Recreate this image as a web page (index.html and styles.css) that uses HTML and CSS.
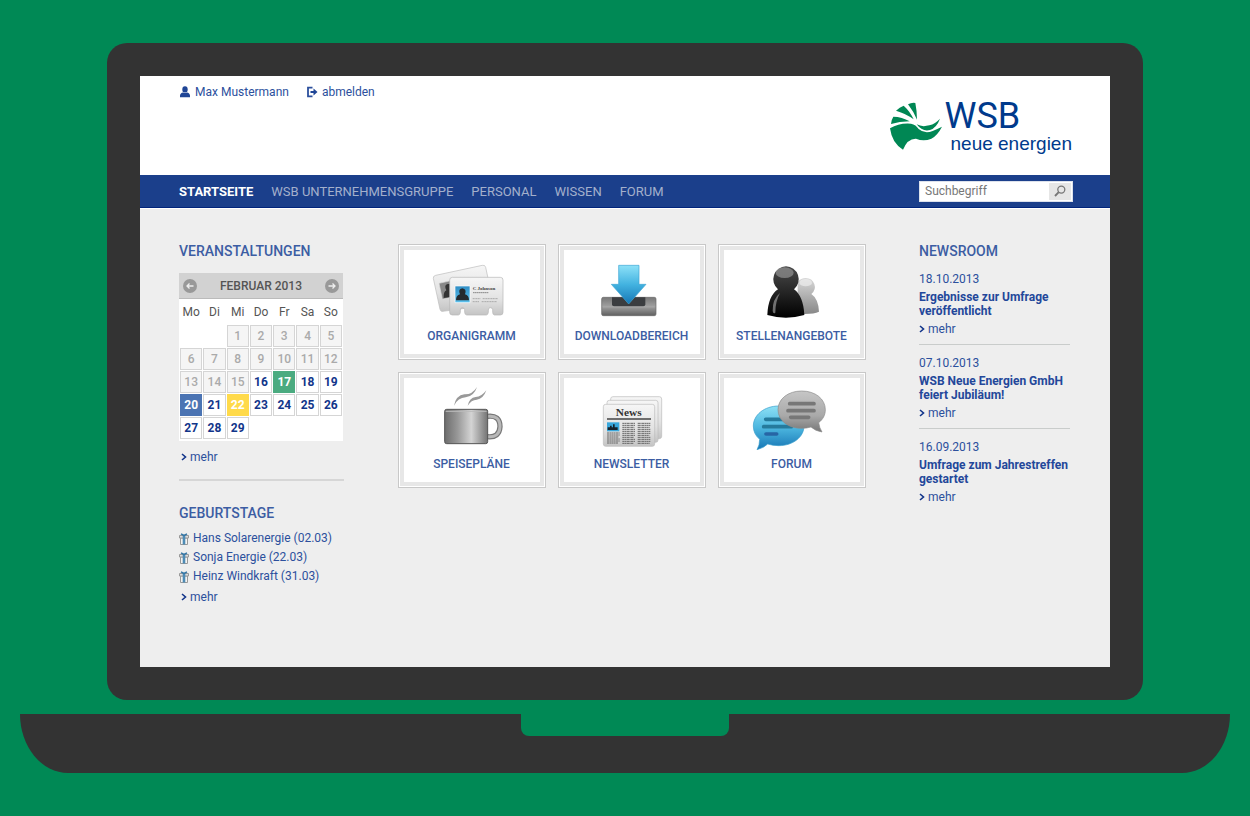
FILE: index.html
```html
<!DOCTYPE html>
<html lang="de">
<head>
<meta charset="utf-8">
<title>WSB neue energien – Intranet</title>
<link rel="stylesheet" href="styles.css">
</head>
<body>
<div class="lid">
<div class="screen">
  <header class="header">
    <div class="account">
      <a href="#"><svg width="12" height="12" viewBox="0 0 12 12"><ellipse cx="6" cy="3.4" rx="2.7" ry="3.2"/><path d="M1 11.3V9.6C1 7.600 2.500 6.600 4 6.400Q6 7.800 8 6.400C9.500 6.600 11 7.600 11 9.600V11.300Z"/></svg>Max Mustermann</a>
      <a href="#"><svg width="12" height="12" viewBox="0 0 12 12"><path d="M6.500 1.700H2V10.300H6.500" fill="none" stroke="currentColor" stroke-width="1.800"/><path d="M4.500 5H7.500V2.600L11.500 6L7.500 9.400V7H4.500Z"/></svg>abmelden</a>
    </div>
    <a class="logo" href="#">
      <svg class="logo-mark" width="52" height="48" viewBox="84 77 156 144">
        <g fill="#008754">
          <path d="M138 84Q149 78 160 80Q165 105 165 130Q155 106 138 84Z"/>
          <path d="M102 103Q113 92 125 88Q144 105 155 129Q133 112 102 103Z"/>
          <path d="M87 143Q88 130 94 121Q120 121 143 135Q112 135 87 143Z"/>
          <path d="M84 156Q112 139 147 142Q162 145 170 158Q188 174 212 164Q228 157 240 151Q226 178 208 187Q185 197 162 187Q137 186 123 220Q90 201 84 156Z"/>
          <path d="M164 144Q180 153 202 147Q220 142 234 127Q224 154 204 161Q181 167 164 144Z"/>
        </g>
      </svg>
      <span class="logo-text"><span class="logo-name">WSB</span><span class="logo-claim">neue energien</span></span>
    </a>
  </header>

  <div class="bar">
    <nav class="nav">
      <a class="active" href="#">STARTSEITE</a>
      <a href="#">WSB UNTERNEHMENSGRUPPE</a>
      <a href="#">PERSONAL</a>
      <a href="#">WISSEN</a>
      <a href="#">FORUM</a>
    </nav>
    <form class="search">
      <input type="search" placeholder="Suchbegriff" aria-label="Suchbegriff">
      <button type="button" aria-label="Suchen"><svg width="12" height="12" viewBox="0 0 12 12" fill="none" stroke="#777" stroke-width="1.300"><circle cx="7.300" cy="4.600" r="3.500"/><path d="M4.700 7.200L1 11" stroke-width="1.900"/></svg></button>
    </form>
  </div>

  <main class="content">
    <aside class="side">
      <section class="events">
        <h2>VERANSTALTUNGEN</h2>
        <div class="calendar">
          <div class="month">
            <button type="button" aria-label="Vorheriger Monat"><svg width="14" height="14" viewBox="0 0 14 14"><circle cx="7" cy="7" r="7" fill="#999"/><path d="M10.500 7H4M6.500 4.500L4 7L6.500 9.500" fill="none" stroke="#eee" stroke-width="1.300"/></svg></button>
            <span>FEBRUAR 2013</span>
            <button type="button" aria-label="Nächster Monat"><svg width="14" height="14" viewBox="0 0 14 14"><circle cx="7" cy="7" r="7" fill="#999"/><path d="M3.500 7H10M7.500 4.500L10 7L7.500 9.500" fill="none" stroke="#eee" stroke-width="1.300"/></svg></button>
          </div>
          <table>
            <thead><tr><th>Mo</th><th>Di</th><th>Mi</th><th>Do</th><th>Fr</th><th>Sa</th><th>So</th></tr></thead>
            <tbody>
              <tr><td class="none"></td><td class="none"></td><td class="past">1</td><td class="past">2</td><td class="past">3</td><td class="past">4</td><td class="past">5</td></tr>
              <tr><td class="past">6</td><td class="past">7</td><td class="past">8</td><td class="past">9</td><td class="past">10</td><td class="past">11</td><td class="past">12</td></tr>
              <tr><td class="past">13</td><td class="past">14</td><td class="past">15</td><td>16</td><td class="green">17</td><td>18</td><td>19</td></tr>
              <tr><td class="blue">20</td><td>21</td><td class="yellow">22</td><td>23</td><td>24</td><td>25</td><td>26</td></tr>
              <tr><td>27</td><td>28</td><td>29</td><td class="none"></td><td class="none"></td><td class="none"></td><td class="none"></td></tr>
            </tbody>
          </table>
        </div>
        <a class="more" href="#"><svg width="6" height="8" viewBox="0 0 6 8"><path d="M1 1L4.500 4L1 7"/></svg>mehr</a>
      </section>
      <section>
        <h2>GEBURTSTAGE</h2>
        <svg class="defs" width="0" height="0"><defs>
          <g id="gift"><path d="M1.500 5H8.500V11.500H1.500Z" fill="#f4f4f2" stroke="#999"/><path d="M.5 2.500H9.500V5H.5Z" fill="#ddd" stroke="#999"/><path d="M3.700 2.500H6.300V11.500H3.700Z" fill="#4d8bb5"/><path d="M5 2.500L2 .8M5 2.500L8 .8" stroke="#3576a5" stroke-width="1.500"/></g>
        </defs></svg>
        <ul class="birthdays">
          <li><svg width="10" height="12" viewBox="0 0 10 12"><use href="#gift"/></svg>Hans Solarenergie (02.03)</li>
          <li><svg width="10" height="12" viewBox="0 0 10 12"><use href="#gift"/></svg>Sonja Energie (22.03)</li>
          <li><svg width="10" height="12" viewBox="0 0 10 12"><use href="#gift"/></svg>Heinz Windkraft (31.03)</li>
        </ul>
        <a class="more" href="#"><svg width="6" height="8" viewBox="0 0 6 8"><path d="M1 1L4.500 4L1 7"/></svg>mehr</a>
      </section>
    </aside>

    <div class="tiles">
      <a class="tile" href="#"><span class="face">
        <svg width="80" height="68" viewBox="123 69 240 204">
          <defs>
            <linearGradient id="card" x1="0" y1="0" x2="0" y2="1"><stop offset="0" stop-color="#f6f6f6"/><stop offset=".6" stop-color="#e2e2e2"/><stop offset="1" stop-color="#c4c4c4"/></linearGradient>
            <linearGradient id="photo" x1="0" y1="0" x2="0" y2="1"><stop offset="0" stop-color="#2f8dc4"/><stop offset="1" stop-color="#5cc2ee"/></linearGradient>
          </defs>
          <path d="M134 121L274 91Q282 89 284 97L308 208L156 229Q149 231 147 223L127 130Q126 123 134 121Z" fill="url(#card)" stroke="#bbb" stroke-width="2"/>
          <path d="M144 145L184 136L195 184L154 193Z" fill="#888" stroke="#ddd" stroke-width="2"/>
          <path d="M158 189Q157 170 166 166Q158 150 170 147H190V184Z" fill="#333"/>
          <path d="M184 127H328Q336 127 336 135V232Q336 240 328 240H310Q305 239 305 232V224Q304 218 298 218Q292 218 292 225V232Q291 240 286 240H227Q221 239 221 232V224Q220 218 214 218Q208 218 208 225V232Q207 240 202 240H184Q176 240 176 232V135Q176 127 184 127Z" fill="url(#card)" stroke="#b5b5b5" stroke-width="2"/>
          <path d="M192 153H237V203H192Z" fill="url(#photo)" stroke="#fff" stroke-width="2"/>
          <path d="M195 196Q195 181 207 178Q200 162 214 160Q228 162 222 178Q234 181 234 196Z" fill="#252a2e"/>
          <text x="245" y="165" class="card-name">C Johnson</text>
          <path d="M246 173H292" stroke="#888" stroke-width="3" stroke-dasharray="5 1"/>
          <path d="M245 191H268M275 191H321M245 200H264M272 200H318" stroke="#aaa" stroke-width="3" stroke-dasharray="4 1"/>
        </svg>
        <span class="label">ORGANIGRAMM</span></span></a>
      <a class="tile" href="#"><span class="face">
        <svg width="80" height="68" viewBox="603 69 240 204">
          <defs>
            <linearGradient id="tray" x1="0" y1="0" x2="0" y2="1"><stop offset="0" stop-color="#777"/><stop offset=".5" stop-color="#a0a0a0"/><stop offset="1" stop-color="#606060"/></linearGradient>
            <linearGradient id="arrow" x1="0" y1="0" x2="0" y2="1"><stop offset="0" stop-color="#8de1f8"/><stop offset=".5" stop-color="#42b2e0"/><stop offset="1" stop-color="#1676b5"/></linearGradient>
          </defs>
          <rect x="632" y="187" width="163" height="55" rx="5" fill="url(#tray)" stroke="#666" stroke-width="2"/>
          <path d="M663 187H763V208Q763 214 757 214H669Q663 214 663 208Z" fill="#3b3d40"/>
          <path d="M636 216H791" stroke="#bbb" stroke-width="2" opacity=".5"/>
          <path d="M683 91H744V148H765L713 207L661 148H683Z" fill="url(#arrow)" stroke="#3da4d3" stroke-width="2"/>
        </svg>
        <span class="label">DOWNLOADBEREICH</span></span></a>
      <a class="tile" href="#"><span class="face">
        <svg width="80" height="68" viewBox="363 69 240 204">
          <defs>
            <linearGradient id="dark" x1="0" y1="0" x2="0" y2="1"><stop offset="0" stop-color="#4a4a4a"/><stop offset=".5" stop-color="#252525"/><stop offset="1" stop-color="#000"/></linearGradient>
            <linearGradient id="light" x1="0" y1="0" x2="0" y2="1"><stop offset="0" stop-color="#d8d8d8"/><stop offset="1" stop-color="#888"/></linearGradient>
          </defs>
          <path d="M524 129A28 27 0 0 1 541 177Q562 191 564 230Q545 239 500 236V140Q510 129 524 129Z" fill="url(#light)"/>
          <ellipse cx="524" cy="143" rx="19" ry="11" fill="#eee" opacity=".7"/>
          <path d="M465 94A39 39 0 0 1 489 163Q517 183 520 240Q465 256 409 240Q411 183 441 163A39 39 0 0 1 465 94Z" fill="url(#dark)"/>
          <ellipse cx="461" cy="113" rx="27" ry="16" fill="#999" opacity=".65"/>
          <path d="M447 174Q424 192 425 228Q427 239 433 233Q433 199 447 174Z" fill="#999" opacity=".7"/>
        </svg>
        <span class="label">STELLENANGEBOTE</span></span></a>
      <a class="tile" href="#"><span class="face">
        <svg width="80" height="68" viewBox="123 63 240 204">
          <defs>
            <linearGradient id="mug"><stop offset="0" stop-color="#6d6d6d"/><stop offset=".3" stop-color="#989898"/><stop offset=".62" stop-color="#d4d4d4"/><stop offset="1" stop-color="#747474"/></linearGradient>
          </defs>
          <path d="M189 122Q195 91 220 88Q244 89 258 66Q249 94 224 97Q201 98 189 122ZM230 122Q235 98 254 96Q272 95 286 76Q277 102 257 104Q241 104 230 122Z" fill="#999"/>
          <path d="M289 154Q327 149 327 185Q325 219 289 215" fill="none" stroke="#777" stroke-width="16"/>
          <path d="M289 154Q327 149 327 185Q325 219 289 215" fill="none" stroke="#b8b8b8" stroke-width="9"/>
          <rect x="161" y="133" width="129" height="103" rx="6" fill="url(#mug)" stroke="#555" stroke-width="3"/>
          <path d="M164 139H287" stroke="#bbb" stroke-width="3"/>
        </svg>
        <span class="label">SPEISEPLÄNE</span></span></a>
      <a class="tile" href="#"><span class="face">
        <svg width="80" height="68" viewBox="603 63 240 204">
          <g fill="url(#card)" stroke="#bbb" stroke-width="2">
            <rect x="659" y="95" width="153" height="126" rx="7"/>
            <rect x="648" y="106" width="153" height="126" rx="7"/>
            <rect x="637" y="118" width="154" height="126" rx="7"/>
          </g>
          <text x="713" y="154" text-anchor="middle" class="paper-name">News</text>
          <path d="M648 162H780" stroke="#444" stroke-width="5"/>
          <rect x="648" y="172" width="37" height="27" fill="#39a7dc"/>
          <path d="M650 195V187H657V182H662V187H666V178H671V187H680V195Z" fill="#17222b"/>
          <path d="M648 204H686M648 210H686M648 216H683M648 222H686M648 228H686M648 234H682M694 175H732M694 181H732M694 187H730M694 193H732M694 199H732M694 205H731M694 211H732M694 217H729M694 223H732M694 229H732M694 235H728M740 175H779M740 181H779M740 187H776M740 193H779M740 199H778M740 205H779M740 211H775M740 217H779M740 223H779M740 229H778M740 235H776" stroke="#666" stroke-width="3" stroke-dasharray="7 1 4 1"/>
        </svg>
        <span class="label">NEWSLETTER</span></span></a>
      <a class="tile" href="#"><span class="face">
        <svg width="80" height="68" viewBox="363 63 240 204">
          <defs>
            <linearGradient id="bubble" x1="0" y1="0" x2="0" y2="1"><stop offset="0" stop-color="#8de0f5"/><stop offset=".5" stop-color="#4cb6df"/><stop offset="1" stop-color="#1776b5"/></linearGradient>
            <linearGradient id="grey" x1="0" y1="0" x2="0" y2="1"><stop offset="0" stop-color="#c6c6c6"/><stop offset=".6" stop-color="#a9a9a9"/><stop offset="1" stop-color="#777"/></linearGradient>
          </defs>
          <path d="M443 123C486 123 519 150 519 183C519 216 486 242 443 242Q425 242 410 237Q398 249 378 254Q386 241 386 223Q367 207 367 183C367 150 400 123 443 123Z" fill="url(#bubble)" stroke="#369dcc" stroke-width="2"/>
          <path d="M404 163H455M398 185H481" stroke="#267a9c" stroke-width="11" stroke-linecap="round"/><path d="M405 207H437" stroke="#2765a5" stroke-width="11" stroke-linecap="round"/>
          <path d="M512 78C553 78 583 102 583 134C583 150 576 163 563 173Q565 188 573 201Q553 198 540 186Q527 190 512 190C471 190 441 166 441 134C441 102 471 78 512 78Z" fill="url(#grey)" stroke="#8b8b8b" stroke-width="2"/>
          <path d="M476 116H549M471 137H549M479 157H533" stroke="#777" stroke-width="11" stroke-linecap="round"/>
        </svg>
        <span class="label">FORUM</span></span></a>
    </div>

    <aside class="news">
      <h2>NEWSROOM</h2>
      <article>
        <time>18.10.2013</time>
        <h3>Ergebnisse zur Umfrage veröffentlicht</h3>
        <a class="more" href="#"><svg width="6" height="8" viewBox="0 0 6 8"><path d="M1 1L4.500 4L1 7"/></svg>mehr</a>
      </article>
      <article>
        <time>07.10.2013</time>
        <h3>WSB Neue Energien GmbH feiert Jubiläum!</h3>
        <a class="more" href="#"><svg width="6" height="8" viewBox="0 0 6 8"><path d="M1 1L4.500 4L1 7"/></svg>mehr</a>
      </article>
      <article>
        <time>16.09.2013</time>
        <h3>Umfrage zum Jahrestreffen gestartet</h3>
        <a class="more" href="#"><svg width="6" height="8" viewBox="0 0 6 8"><path d="M1 1L4.500 4L1 7"/></svg>mehr</a>
      </article>
    </aside>
  </main>
</div>
</div>
<div class="base"><div class="notch"></div></div>
</body>
</html>
```
FILE: styles.css
```css
* { box-sizing: border-box; }
body {
  margin: 0;
  padding: 43px 20px;
  background: #008955;
  font: 12px/20px Roboto, "Liberation Sans", sans-serif;
  color: #2c509d;
}
a { color: inherit; text-decoration: none; }
button { border: 0; padding: 0; background: none; display: flex; align-items: center; justify-content: center; }
svg { display: block; flex: none; }
h2, h3, ul { margin: 0; padding: 0; }
h2 { font-size: 14px; line-height: 20px; font-weight: 500; color: #3c5da3; }

.lid { margin: 0 87px; padding: 33px; background: #333; border-radius: 20px; }
.screen { background: #eee; }
.base { margin-top: 14px; height: 59px; background: #333; border-radius: 0 0 48px 48px / 0 0 59px 59px; }
.notch { width: 208px; height: 22px; margin: 0 auto; background: #008955; border-radius: 0 0 8px 8px; }

.header { display: flex; justify-content: space-between; height: 99px; padding: 6px 38px 0 39px; background: #fff; }
.account { display: flex; gap: 17px; height: 20px; }
.account a { display: flex; align-items: center; gap: 4px; }
.account svg { fill: #1f4596; }
.logo { display: flex; padding-top: 16px; color: #003a8c; }
.logo-mark { margin-top: 4px; }
.logo-text { display: flex; flex-direction: column; }
.logo-name { padding-left: 3px; font-size: 36px; line-height: 36px; }
.logo-claim { padding-left: 9px; font: 19px/20px "Liberation Sans", sans-serif; }

.bar { display: flex; align-items: center; justify-content: space-between; padding: 0 37px 0 39px; height: 33px; background: #1b3f8b; border-bottom: 1px solid #00247c; box-shadow: 0 1px #fff; }
.nav { display: flex; gap: 18px; padding-top: 2px; font-size: 13px; line-height: 30px; color: #a3b0cb; }
.nav .active { color: #fff; font-weight: 700; }
.search { display: flex; width: 154px; height: 21px; padding: 1px; background: #fff; border: 1px solid #dde2ec; }
.search input { flex: 1; min-width: 0; border: 0; padding: 0 4px; background: #fff; outline: 0; font: 12px/17px Roboto, sans-serif; color: #666; }
.search input::placeholder { color: #777; opacity: 1; }
.search button { width: 22px; background: #e6e6e6; }

.content { display: grid; grid-template-columns: 165px 468px 151px; justify-content: space-between; padding: 33px 40px 60px 39px; }

.events { padding-bottom: 12px; margin-bottom: 22px; border-bottom: 2px solid #d6d6d6; }
.events .more { margin-top: 6px; }
.calendar { width: 164px; margin-top: 12px; padding-bottom: 1px; background: #fff; }
.month { display: flex; align-items: center; justify-content: space-between; height: 26px; padding: 0 4px; background: #d2d2d2; border-bottom: 1px solid #bbb; font-weight: 500; color: #555; }
table { width: 164px; table-layout: fixed; border-collapse: separate; border-spacing: 1px; }
th { height: 24px; padding: 0; font-weight: 400; color: #555; }
td { height: 22px; padding: 0; border: 1px solid #d5d5d5; text-align: center; line-height: 20px; font-weight: 700; color: #12358a; }
td.none { border-color: transparent; }
td.past { background: #f5f5f5; color: #aaa; font-weight: 500; }
td.green { background: #4bab80; border-color: #4bab80; color: #fff; }
td.blue { background: #4b74b3; border-color: #4b74b3; color: #fff; }
td.yellow { background: #ffda4a; border-color: #ffda4a; color: #fff; }
.more { display: flex; align-items: center; gap: 3px; padding-left: 2px; }
.more path { fill: none; stroke: #12358a; stroke-width: 1.6; }
.defs { position: absolute; }
.birthdays { list-style: none; margin: 6px 0 1px; }
.birthdays li { display: flex; align-items: center; gap: 4px; line-height: 19px; white-space: nowrap; }

.tiles { display: grid; grid-template-columns: repeat(3, minmax(0, 1fr)); gap: 12px; align-content: start; margin-top: 3px; }
.tile { padding: 1px; background: #fff; border: 1px solid #c8c8c8; }
.face { display: flex; flex-direction: column; align-items: center; height: 112px; padding-top: 8px; border: 4px solid #e7e7e7; }
.label { font-size: 12px; font-weight: 500; line-height: 20px; color: #3c5da3; }
.card-name { font: bold 15px "Liberation Serif", serif; fill: #444; }
.paper-name { font: bold 34px "Liberation Serif", serif; fill: #333; }

.news h2 { margin-bottom: 8px; }
.news article { padding-bottom: 5px; margin-bottom: 8px; border-bottom: 1px solid #c9cccb; }
.news article:last-child { border: 0; }
.news time { display: block; }
h3 { margin: 1px 0; font-size: 12px; line-height: 14px; font-weight: 700; color: #23479a; }
.news .more { padding-left: 0; }
```
